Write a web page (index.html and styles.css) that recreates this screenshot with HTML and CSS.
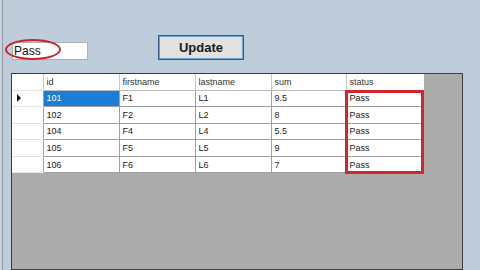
FILE: index.html
```html
<!DOCTYPE html>
<html>
<head>
<meta charset="utf-8">
<link rel="stylesheet" href="styles.css">
</head>
<body>
<div class="edge"></div>
<div class="main">
  <div class="top">
    <div class="textbox">
      <span class="tb-text">Pass</span>
      <div class="ellipse"></div>
    </div>
    <div class="button">Update</div>
  </div>
  <div class="grid">
    <table class="dgv">
      <colgroup>
        <col class="c-rh"><col class="c76"><col class="c76"><col class="c76"><col class="c75"><col class="c78">
      </colgroup>
      <thead>
        <tr><th class="rh"></th><th>id</th><th>firstname</th><th>lastname</th><th>sum</th><th>status</th></tr>
      </thead>
      <tbody>
        <tr><td class="rh"><span class="arrow"></span></td><td class="sel">101</td><td>F1</td><td>L1</td><td>9.5</td><td>Pass</td></tr>
        <tr><td class="rh"></td><td>102</td><td>F2</td><td>L2</td><td>8</td><td>Pass</td></tr>
        <tr><td class="rh"></td><td>104</td><td>F4</td><td>L4</td><td>5.5</td><td>Pass</td></tr>
        <tr><td class="rh"></td><td>105</td><td>F5</td><td>L5</td><td>9</td><td>Pass</td></tr>
        <tr><td class="rh"></td><td>106</td><td>F6</td><td>L6</td><td>7</td><td>Pass</td></tr>
      </tbody>
    </table>
    <div class="redbox"></div>
  </div>
</div>
</body>
</html>
```

FILE: styles.css
```css
html, body {
  margin: 0;
  padding: 0;
  width: 480px;
  height: 270px;
  overflow: hidden;
}
body {
  background: #bfccd9;
  display: flex;
  font-family: "Liberation Sans", Arial, sans-serif;
}
.edge {
  width: 2px;
  flex: none;
  background: #c9d3dd;
  border-right: 1px solid #8e9aa6;
}
.main {
  flex: 1;
  display: flex;
  flex-direction: column;
}
.top {
  height: 73px;
  flex: none;
  display: flex;
  align-items: flex-start;
  padding-left: 9px;
}
.textbox {
  position: relative;
  margin-top: 42px;
  width: 76px;
  height: 18px;
  box-sizing: border-box;
  background: #ffffff;
  border: 1px solid #a9b1b9;
  font-size: 12px;
  line-height: 16px;
  color: #111;
  padding-left: 1px;
}
.ellipse {
  position: absolute;
  left: -8px;
  top: -4px;
  width: 56px;
  height: 21px;
  box-sizing: border-box;
  border: 2px solid #c8252c;
  border-radius: 50%;
}
.button {
  margin-top: 35px;
  margin-left: 70px;
  width: 86px;
  height: 25px;
  box-sizing: border-box;
  background: #e1e1e1;
  border: 1px solid #2b5f8e;
  box-shadow: inset 0 0 0 1px #6f9fcc;
  font-weight: bold;
  font-size: 13px;
  line-height: 23px;
  text-align: center;
  color: #1a1a1a;
}
.grid {
  position: relative;
  margin-left: 8px;
  width: 452px;
  height: 210px;
  box-sizing: border-box;
  border: 1px solid #3c3c3c;
  background: #ababab;
}
.dgv {
  border-collapse: collapse;
  table-layout: fixed;
  width: 412px;
  font-size: 9px;
  color: #222;
}
.c-rh { width: 31px; }
.c76 { width: 76px; }
.c75 { width: 75px; }
.c78 { width: 78px; }
.dgv th {
  height: 16px;
  padding: 0 0 0 3px;
  font-weight: normal;
  text-align: left;
  background: #ffffff;
  color: #333;
  border-left: 1px solid #c8c8c8;
  border-bottom: 1px solid #bcbcbc;
  box-sizing: border-box;
}
.dgv td {
  height: 16.6px;
  padding: 0 0 0 3px;
  background: #ffffff;
  border-left: 1px solid #a0a0a0;
  border-bottom: 1px solid #a0a0a0;
  box-sizing: border-box;
  white-space: nowrap;
}
.dgv th.rh, .dgv td.rh {
  border-left: none;
  border-bottom: 1px solid #e4e4e4;
  padding: 0;
}
.dgv td.sel {
  background: #1c7dd4;
  color: #ffffff;
}
.arrow {
  display: block;
  margin-left: 5px;
  width: 0;
  height: 0;
  border-top: 4px solid transparent;
  border-bottom: 4px solid transparent;
  border-left: 4px solid #111;
}
.redbox {
  position: absolute;
  left: 333px;
  top: 16px;
  width: 79px;
  height: 84px;
  box-sizing: border-box;
  border: 3px solid #d2262f;
}
```
